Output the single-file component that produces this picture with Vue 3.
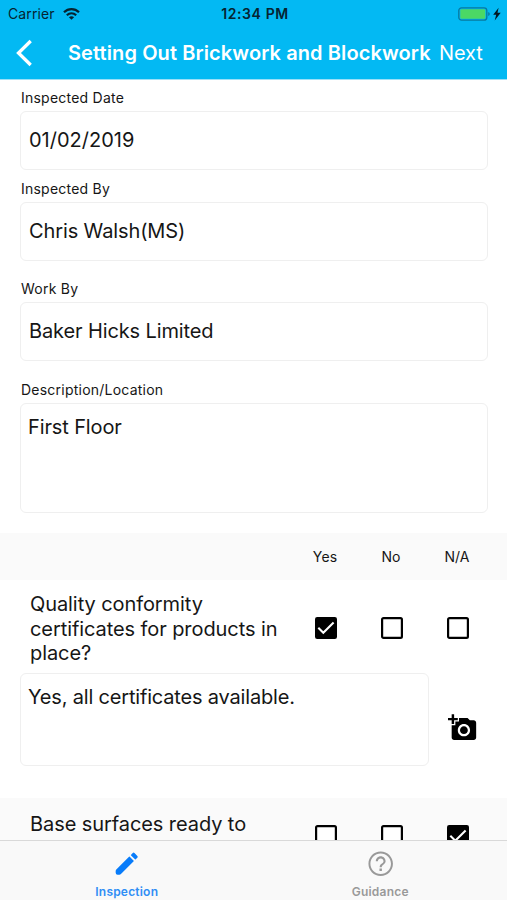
<script setup>
const fields = [
  { label: 'Inspected Date', value: '01/02/2019', cls: 'date' },
  { label: 'Inspected By', value: 'Chris Walsh(MS)', cls: 'by' },
  { label: 'Work By', value: 'Baker Hicks Limited', cls: 'work' },
]
const questions = [
  { text: 'Quality conformity certificates for products in place?', answer: 0, note: 'Yes, all certificates available.' },
  { text: 'Base surfaces ready to', answer: 2, note: '' },
]
const options = ['Yes', 'No', 'N/A']
</script>

<template>
  <div class="screen">
    <header>
      <div class="status">
        <div class="carrier">
          <span>Carrier</span>
          <svg width="17" height="12" viewBox="0 0 17 12" fill="none" stroke="#062431" stroke-width="2.2">
            <path d="M1 4.3C5.3.1 11.7.1 16 4.3M3.8 7.2c2.8-2.6 6.6-2.6 9.4 0" />
            <path d="M8.5 11.8 5.9 9.3c1.5-1.3 3.7-1.3 5.2 0z" fill="#062431" stroke="none" />
          </svg>
        </div>
        <span class="time">12:34 PM</span>
        <svg class="battery" width="44" height="14" viewBox="0 0 44 14">
          <rect x=".8" y=".8" width="28" height="12.4" rx="2.8" fill="none" stroke="#08799f" stroke-width="1.3" />
          <rect x="2.3" y="2.3" width="25" height="9.4" rx="1.3" fill="#4bd865" />
          <path d="M30.2 5v4q1.6-.5 1.6-2t-1.6-2" fill="#08799f" />
          <path d="M40.6.8 35.2 7.8h3l-1.5 5.6 6-7.6h-3.2z" fill="#021821" />
        </svg>
      </div>
      <div class="nav">
        <svg class="back" width="18" height="28" viewBox="0 0 18 28" fill="none" stroke="#fff" stroke-width="3.3">
          <path d="M15.7 2 3.5 14l12.2 12" />
        </svg>
        <h1>Setting Out Brickwork and Blockwork</h1>
        <a class="next">Next</a>
      </div>
    </header>

    <main>
      <section class="form">
        <div v-for="f in fields" :key="f.label" class="field" :class="f.cls">
          <label>{{ f.label }}</label>
          <div class="input"><span>{{ f.value }}</span></div>
        </div>
        <div class="field">
          <label>Description/Location</label>
          <div class="input area"><span>First Floor</span></div>
        </div>
      </section>

      <div class="columns">
        <span v-for="o in options" :key="o">{{ o }}</span>
      </div>

      <section v-for="(q, i) in questions" :key="i" class="question" :class="{ shaded: i % 2 }">
        <div class="row">
          <p>{{ q.text }}</p>
          <div class="checks">
            <svg v-for="(o, j) in options" :key="o" width="24" height="24" viewBox="0 0 24 24">
              <template v-if="q.answer === j">
                <rect x="1" y="1" width="22" height="22" rx="2.2" fill="#000" />
                <path d="M4.3 11.8 9.3 16.7 19.6 6.5" fill="none" stroke="#fff" stroke-width="2.1" />
              </template>
              <rect v-else x="2.1" y="2.1" width="19.8" height="19.8" rx="1.4" fill="#fff" stroke="#000" stroke-width="2.2" />
            </svg>
          </div>
        </div>
        <div class="note">
          <div class="input"><span>{{ q.note }}</span></div>
          <svg width="29.4" height="29.4" viewBox="0 0 24 24">
            <path d="M3 4V1h2v3h3v2H5v3H3V6H0V4zm3 6V7h3V4h7l1.83 2H21c1.1 0 2 .9 2 2v12c0 1.1-.9 2-2 2H5c-1.1 0-2-.9-2-2V10zm7 9c2.76 0 5-2.24 5-5s-2.24-5-5-5-5 2.24-5 5 2.24 5 5 5zm-3.2-5c0 1.77 1.43 3.2 3.2 3.2s3.2-1.43 3.2-3.2-1.43-3.2-3.2-3.2-3.2 1.43-3.2 3.2z" />
          </svg>
        </div>
      </section>
    </main>

    <footer>
      <div class="tab active">
        <svg width="29.4" height="29.4" viewBox="0 0 24 24" fill="#087cfa">
          <path d="M3.5 16.7 13.9 6.3q.3-.3.6 0l3.2 3.2q.3.3 0 .6L7.3 20.5Q6.8 21 6 21H4.6Q3 21 3 19.4V18q0-.8.5-1.3z" />
          <path d="M20.7 7.05a1 1 0 0 0 0-1.4L18.35 3.3a1 1 0 0 0-1.4 0L15.6 4.65q-.3.3 0 .6l3.15 3.15q.3.3.6 0z" />
        </svg>
        <span>Inspection</span>
      </div>
      <div class="tab">
        <svg width="29.4" height="29.4" viewBox="0 0 24 24" fill="#999">
          <path d="M11 18h2v-2h-2v2zm1-16C6.48 2 2 6.48 2 12s4.48 10 10 10 10-4.48 10-10S17.52 2 12 2zm0 18.4c-4.63 0-8.4-3.77-8.4-8.4S7.37 3.6 12 3.6s8.4 3.77 8.4 8.4-3.77 8.4-8.4 8.4zM12 6c-2.21 0-4 1.79-4 4h1.7c0-1.27 1.03-2.3 2.3-2.3s2.3 1.03 2.3 2.3c0 2-3.15 1.75-3.15 5h1.7c0-2.25 3.15-2.5 3.15-5 0-2.21-1.79-4-4-4z" />
        </svg>
        <span>Guidance</span>
      </div>
    </footer>
  </div>
</template>

<style>
body { margin: 0; overflow: hidden; }
</style>

<style scoped>
.screen {
  width: 507px;
  height: 900px;
  display: flex;
  flex-direction: column;
  overflow: hidden;
  background: #fff;
  color: #161616;
  font-family: Inter, "Liberation Sans", sans-serif;
  box-sizing: border-box;
}
svg { display: block; flex: none; }
header {
  flex: none;
  height: 80px;
  background: #03b9f3;
  border-bottom: 1px solid #9ce0f8;
  box-sizing: border-box;
}
.status {
  height: 27px;
  display: grid;
  grid-template-columns: 1fr auto 1fr;
  align-items: center;
  padding: 0 5px 0 8px;
  font-size: 14px;
  color: #062431;
}
.carrier { display: flex; align-items: center; gap: 8px; letter-spacing: .1px; }
.time { font-weight: 600; letter-spacing: .6px; }
.battery { justify-self: end; }
.nav {
  height: 51px;
  display: flex;
  align-items: center;
  color: #fff;
  white-space: nowrap;
}
.back { margin-left: 15px; }
h1 {
  margin: 0 0 0 35px;
  width: 371px;
  font-size: 20px;
  font-weight: 600;
  letter-spacing: .1px;
}
.next { font-size: 20px; letter-spacing: -.1px; }
main { flex: 1; overflow: hidden; display: flex; flex-direction: column; }
.form { padding: 8px 19px 20px 20px; flex: none; }
label {
  display: block;
  height: 23px;
  line-height: 20px;
  font-size: 14px;
  letter-spacing: .23px;
  padding-left: 1px;
}
.input {
  box-sizing: border-box;
  height: 59px;
  border: 1.5px solid #efefef;
  border-radius: 6px;
  display: flex;
  align-items: center;
  padding: 0 0 1px 8px;
  font-size: 20px;
  letter-spacing: -.12px;
  background: #fff;
}
.date { margin-bottom: 9px; }
.date .input { letter-spacing: 0; }
.by { margin-bottom: 18px; }
.work { margin-bottom: 19px; }
.area { height: 110px; align-items: flex-start; padding: 11px 0 0 7px; line-height: 25px; }
.columns {
  flex: none;
  height: 47px;
  background: #fafafa;
  display: grid;
  grid-template-columns: repeat(3, 66px);
  justify-content: end;
  padding: 0 17px 1px 0;
  box-sizing: border-box;
  align-items: center;
  text-align: center;
  font-size: 14px;
  letter-spacing: .1px;
}
.question { flex: none; padding: 12px 0 32px; }
.shaded { background: #fafafa; padding-top: 14px; }
.row { display: flex; align-items: flex-start; padding-left: 30px; }
.row p { margin: 0; width: 283px; height: 74px; padding-right: 32px; box-sizing: border-box; font-size: 20px; line-height: 24.5px; letter-spacing: -.08px; }
.checks { display: flex; gap: 42px; margin: 24px 0 0 1px; }
.shaded .checks { margin-top: 12px; }
.note { display: flex; align-items: center; padding: 7px 0 0 20px; }
.note .input { width: 409px; height: 93px; margin-right: 19px; align-items: flex-start; padding: 11px 0 0 7px; line-height: 25px; letter-spacing: -.18px; }
.note svg { margin-top: 16px; }
footer {
  flex: none;
  height: 60px;
  box-sizing: border-box;
  display: grid;
  grid-template-columns: 1fr 1fr;
  border-top: 1px solid #d9d9d9;
  background: #f9f9f9;
}
.tab {
  display: flex;
  flex-direction: column;
  align-items: center;
  padding-top: 8px;
  font-size: 12px;
  font-weight: 600;
  letter-spacing: .2px;
  color: #999;
  gap: 6px;
}
.active { color: #2f8ef5; }
</style>
